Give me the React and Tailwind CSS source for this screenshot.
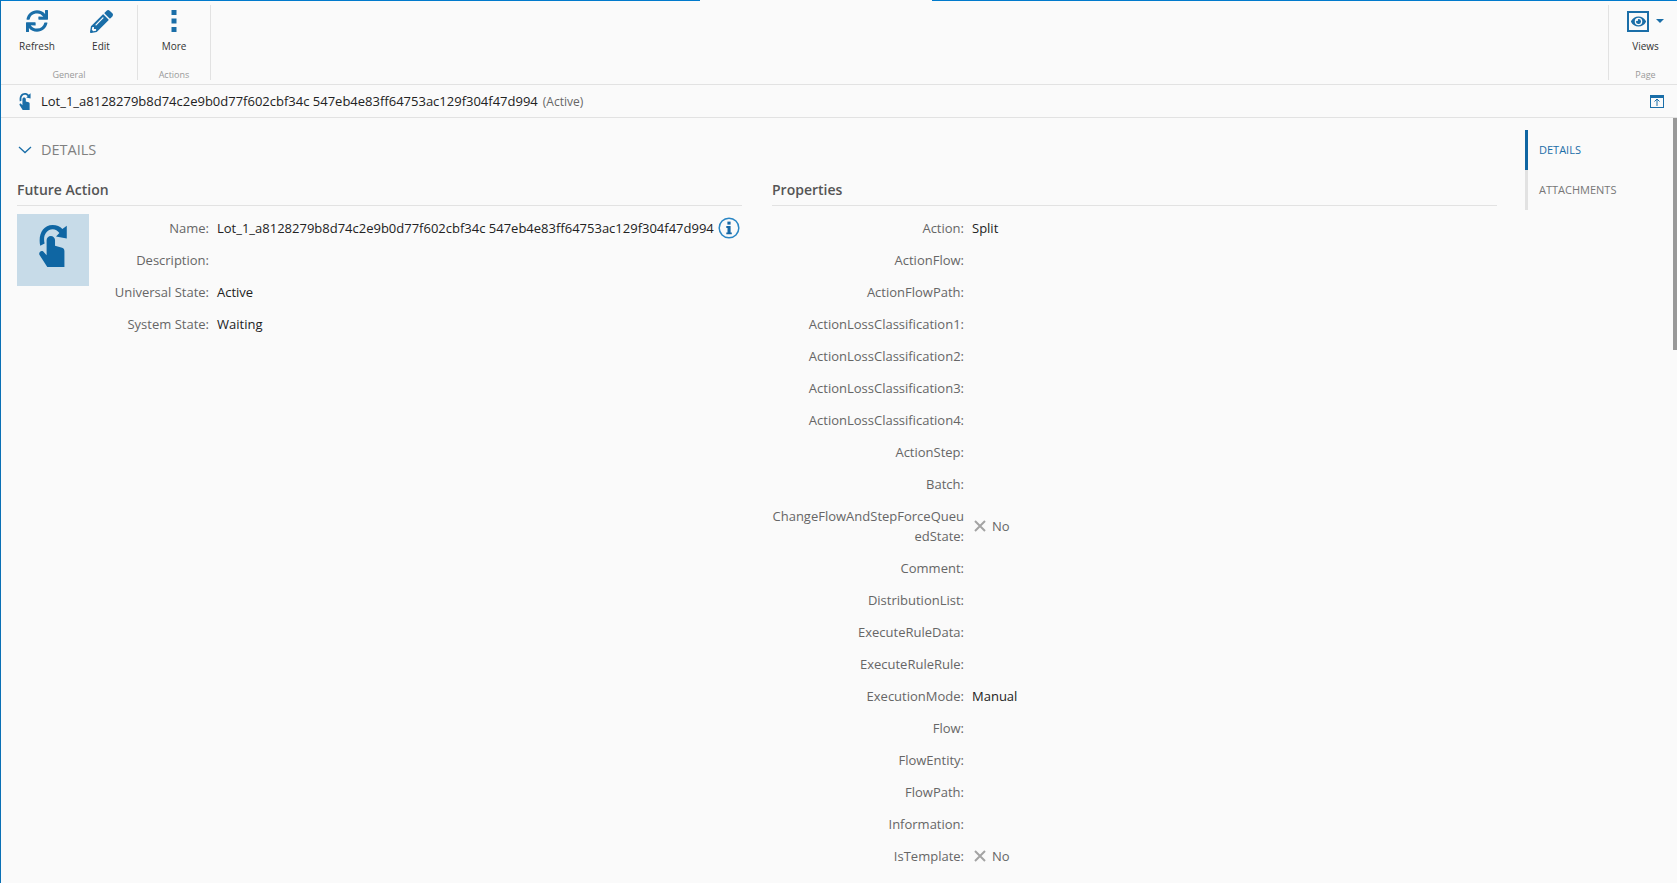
import React from 'react';
import { FaSync, FaPencilAlt, FaEye } from 'react-icons/fa';

const lotName = 'Lot_1_a8128279b8d74c2e9b0d77f602cbf34c 547eb4e83ff64753ac129f304f47d994';

const properties = [
  { label: 'Action', value: 'Split' },
  { label: 'ActionFlow' },
  { label: 'ActionFlowPath' },
  { label: 'ActionLossClassification1' },
  { label: 'ActionLossClassification2' },
  { label: 'ActionLossClassification3' },
  { label: 'ActionLossClassification4' },
  { label: 'ActionStep' },
  { label: 'Batch' },
  { label: 'ChangeFlowAndStepForceQueuedState', no: true },
  { label: 'Comment' },
  { label: 'DistributionList' },
  { label: 'ExecuteRuleData' },
  { label: 'ExecuteRuleRule' },
  { label: 'ExecutionMode', value: 'Manual' },
  { label: 'Flow' },
  { label: 'FlowEntity' },
  { label: 'FlowPath' },
  { label: 'Information' },
  { label: 'IsTemplate', no: true },
];

function HandIcon({ className }) {
  return (
    <svg viewBox="0 0 82 125" className={className} fill="currentColor">
      <path d="M3 62C-4 30 10 0 40 0c12 0 22 4 29 12L82 2v38L50 34l10-10c-5-7-12-11-20-11-18 0-30 19-24 42z" />
      <path d="M22 45c0-7 6-12 12.5-12S47 38 47 45v17l21 6c5 2 7 5 7 10v47H24L1 89c-2-3-1-7 1-9 3-3 7-3 10-1l10 11z" />
    </svg>
  );
}

function MoreIcon() {
  return (
    <svg viewBox="0 0 6 22" className="h-[22px] w-[6px]" fill="currentColor">
      <rect x="0.5" y="0" width="5" height="5" />
      <rect x="0.5" y="8.5" width="5" height="5" />
      <rect x="0.5" y="17" width="5" height="5" />
    </svg>
  );
}

function InfoIcon() {
  return (
    <svg viewBox="0 0 22 22" className="h-[22px] w-[22px] shrink-0">
      <circle cx="11" cy="11" r="9.8" fill="none" stroke="#2a86c4" strokeWidth="1.5" />
      <rect x="9.4" y="4.6" width="3.2" height="3" fill="#1668a6" />
      <path d="M8.3 9h4.3v6.4h1.2v1.9H8.3v-1.9h1.2v-4.5H8.3z" fill="#1668a6" />
    </svg>
  );
}

function NoValue() {
  return (
    <span className="ml-[2px] flex items-center gap-[6px] text-[#666]">
      <svg viewBox="0 0 12 12" className="h-3 w-3" stroke="#a3a3a3" strokeWidth="2">
        <path d="M1 1l10 10M11 1L1 11" />
      </svg>
      No
    </span>
  );
}

function RibbonButton({ icon, label }) {
  return (
    <div className="flex w-16 flex-col items-center">
      <div className="flex h-[26px] items-center justify-center text-[#1a6ea8]">{icon}</div>
      <div className="mt-[5px] text-[10px] leading-[14px] text-[#333]">{label}</div>
    </div>
  );
}

function RibbonGroup({ label, className, children }) {
  return (
    <div className={`flex h-[75px] flex-col ${className}`}>
      <div className="flex flex-1 pt-[3px]">{children}</div>
      <div className="text-center text-[9px] leading-[10px] text-[#999]">{label}</div>
    </div>
  );
}

export default function App() {
  return (
    <div className="relative h-[883px] overflow-hidden border-l border-[#0a70b5] bg-[#fafafa] font-['Open_Sans',sans-serif] text-[13px]">
      {/* top accent line with the gap in the middle */}
      <div className="flex h-px">
        <div className="w-[699px] bg-[#007acc]" />
        <div className="w-[232px]" />
        <div className="flex-1 bg-[#007acc]" />
      </div>

      {/* ribbon */}
      <div className="flex h-[84px] items-start border-b border-[#e2e2e2] pt-1">
        <RibbonGroup label="General" className="w-[137px] border-r border-[#e2e2e2]">
          <div className="w-1" />
          <RibbonButton icon={<FaSync className="h-[22px] w-[22px]" />} label="Refresh" />
          <RibbonButton icon={<FaPencilAlt className="h-[23px] w-[23px]" />} label="Edit" />
        </RibbonGroup>
        <RibbonGroup label="Actions" className="w-[73px] border-r border-[#e2e2e2]">
          <div className="w-1" />
          <RibbonButton icon={<MoreIcon />} label="More" />
        </RibbonGroup>
        <div className="flex-1" />
        <RibbonGroup label="Page" className="w-[69px] border-l border-[#e2e2e2] pl-[5px]">
          <div className="flex w-full flex-col items-center">
            <div className="flex h-[26px] items-center text-[#1a6ea8]">
              <div className="flex h-[21px] w-[22px] items-center justify-center border-2 border-[#1a6ea8]">
                <FaEye className="h-[15px] w-[15px]" />
              </div>
              <div className="ml-[7px] h-0 w-0 border-x-[4px] border-t-[4px] border-x-transparent border-t-[#1a6ea8]" />
            </div>
            <div className="mt-[5px] text-[10px] leading-[14px] text-[#333]">Views</div>
          </div>
        </RibbonGroup>
      </div>

      {/* title bar */}
      <div className="flex h-[33px] items-center border-b border-[#e2e2e2] pl-[18px] pr-[13px]">
        <HandIcon className="h-[17px] w-[12px] text-[#1a6ea8]" />
        <span className="ml-[10px] translate-y-px text-[#222]">{lotName}</span>
        <span className="ml-[5px] translate-y-px text-[12px] text-[#666]">(Active)</span>
        <div className="ml-auto flex h-[13px] w-[14px] items-center justify-center border border-t-[3px] border-[#1a6ea8] text-[#1a6ea8]">
          <svg viewBox="0 0 8 8" className="h-2 w-2" fill="none" stroke="currentColor" strokeWidth="1">
            <path d="M4 8V1M1.5 3.5L4 1l2.5 2.5" />
          </svg>
        </div>
      </div>

      {/* body */}
      <div className="flex pl-4">
        <div className="w-[1480px] pt-[11px]">
          <div className="flex h-[41px] items-center">
            <svg viewBox="0 0 14 8" className="ml-[1px] h-2 w-[14px]" fill="none" stroke="#1a6ea8" strokeWidth="1.3">
              <path d="M1 1l6 5.5L13 1" />
            </svg>
            <span className="ml-[9px] text-[14.5px] uppercase text-[#808080]">Details</span>
          </div>

          <div className="mt-[10px] grid grid-cols-[725px_725px] gap-x-[30px]">
            <section>
              <h2 className="h-[26px] border-b border-[#e2e2e2] text-[14px] font-semibold leading-[20px] text-[#555]">Future Action</h2>
              <div className="flex pt-2">
                <div className="flex h-[72px] w-[72px] shrink-0 items-center justify-center bg-[#c7dbe8]">
                  <HandIcon className="h-[42px] w-[28px] -translate-y-1 text-[#0f66a3]" />
                </div>
                <div className="-mt-px flex-1">
                  {[
                    ['Name', lotName],
                    ['Description', ''],
                    ['Universal State', 'Active'],
                    ['System State', 'Waiting'],
                  ].map(([label, value]) => (
                    <div key={label} className="flex h-8 items-center">
                      <div className="w-[120px] shrink-0 text-right text-[#666]">{label}:</div>
                      <div className="ml-2 whitespace-nowrap text-[#222]">{value}</div>
                      {label === 'Name' && <div className="ml-[4px] -translate-y-px"><InfoIcon /></div>}
                    </div>
                  ))}
                </div>
              </div>
            </section>

            <section>
              <h2 className="h-[26px] border-b border-[#e2e2e2] text-[14px] font-semibold leading-[20px] text-[#555]">Properties</h2>
              <div className="pt-[6px]">
                {properties.map((p) => (
                  <div key={p.label} className="flex min-h-8 items-center py-[6px]">
                    <div className="w-[192px] shrink-0 text-right leading-[20px] text-[#666] [overflow-wrap:anywhere]">{p.label}:</div>
                    <div className="ml-2 leading-[20px] text-[#222]">{p.no ? <NoValue /> : p.value}</div>
                  </div>
                ))}
              </div>
            </section>
          </div>
        </div>

        {/* side tabs */}
        <div className="ml-[28px] mt-[12px] h-[80px] w-[140px] text-[11px] uppercase">
          <div className="flex h-10 items-center border-l-[3px] border-[#0f66a3] pl-[11px] text-[#1a6ea8]">Details</div>
          <div className="flex h-10 items-center border-l-[3px] border-[#e2e2e2] pl-[11px] text-[#777]">Attachments</div>
        </div>
      </div>

      {/* scrollbar thumb */}
      <div className="absolute right-0 top-[118px] h-[232px] w-1 bg-[#999]" />
    </div>
  );
}
